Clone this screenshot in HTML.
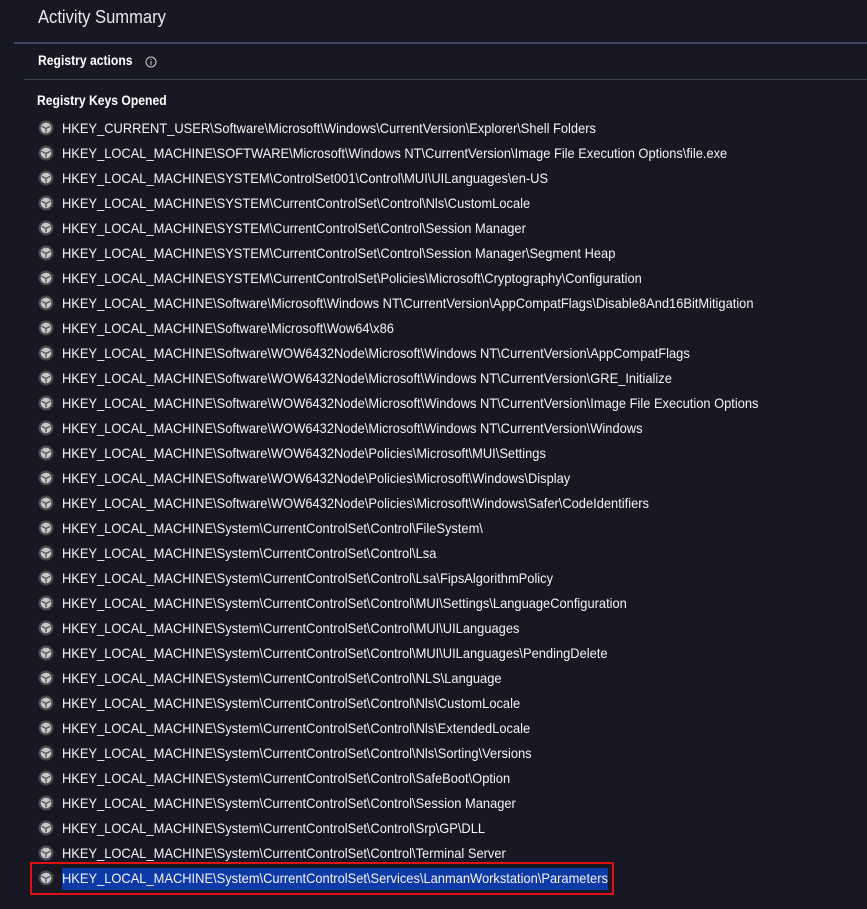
<!DOCTYPE html>
<html><head><meta charset="utf-8"><style>
html,body{margin:0;padding:0;background:#181824;width:867px;height:909px;overflow:hidden;font-family:"Liberation Sans",sans-serif;color:#fff}
.a{position:absolute;white-space:nowrap}
.t{position:absolute;left:62px;font-size:14px;line-height:18px;transform:scaleX(0.92);transform-origin:left center;white-space:nowrap;color:#f4f4f6}
.ic{position:absolute;left:38px;width:16px;height:16px}
</style></head><body>
<div class="a" style="left:38px;top:6px;font-size:18px;line-height:22px;color:#e8e8ee;transform:scaleX(0.92);transform-origin:left">Activity Summary</div>
<div class="a" style="left:14px;top:42px;width:853px;height:2px;background:#3c4460"></div>
<div class="a" style="left:38px;top:52px;font-size:13.5px;font-weight:bold;line-height:18px;transform:scaleX(0.9);transform-origin:left">Registry actions</div>
<svg class="a" style="left:145px;top:56px" width="12" height="12" viewBox="0 0 12 12"><circle cx="6" cy="6" r="5" fill="none" stroke="#ccc" stroke-width="1"/><rect x="5.5" y="5" width="1" height="4" fill="#ccc"/><rect x="5.5" y="3" width="1" height="1" fill="#ccc"/></svg>
<div class="a" style="left:24px;top:79px;width:843px;height:1px;background:#3a3f55"></div>
<div class="a" style="left:37px;top:92px;font-size:13.5px;font-weight:bold;line-height:18px;transform:scaleX(0.9);transform-origin:left">Registry Keys Opened</div>
<div class="a" style="left:30px;top:862px;width:580px;height:29px;border:2px solid #e01010"></div>
<div class="a" style="left:62px;top:868px;width:546px;height:22px;background:#0d3aa6"></div>
<div id="list"></div>
<script>
var k=["HKEY_CURRENT_USER\\Software\\Microsoft\\Windows\\CurrentVersion\\Explorer\\Shell Folders",
"HKEY_LOCAL_MACHINE\\SOFTWARE\\Microsoft\\Windows NT\\CurrentVersion\\Image File Execution Options\\file.exe",
"HKEY_LOCAL_MACHINE\\SYSTEM\\ControlSet001\\Control\\MUI\\UILanguages\\en-US",
"HKEY_LOCAL_MACHINE\\SYSTEM\\CurrentControlSet\\Control\\Nls\\CustomLocale",
"HKEY_LOCAL_MACHINE\\SYSTEM\\CurrentControlSet\\Control\\Session Manager",
"HKEY_LOCAL_MACHINE\\SYSTEM\\CurrentControlSet\\Control\\Session Manager\\Segment Heap",
"HKEY_LOCAL_MACHINE\\SYSTEM\\CurrentControlSet\\Policies\\Microsoft\\Cryptography\\Configuration",
"HKEY_LOCAL_MACHINE\\Software\\Microsoft\\Windows NT\\CurrentVersion\\AppCompatFlags\\Disable8And16BitMitigation",
"HKEY_LOCAL_MACHINE\\Software\\Microsoft\\Wow64\\x86",
"HKEY_LOCAL_MACHINE\\Software\\WOW6432Node\\Microsoft\\Windows NT\\CurrentVersion\\AppCompatFlags",
"HKEY_LOCAL_MACHINE\\Software\\WOW6432Node\\Microsoft\\Windows NT\\CurrentVersion\\GRE_Initialize",
"HKEY_LOCAL_MACHINE\\Software\\WOW6432Node\\Microsoft\\Windows NT\\CurrentVersion\\Image File Execution Options",
"HKEY_LOCAL_MACHINE\\Software\\WOW6432Node\\Microsoft\\Windows NT\\CurrentVersion\\Windows",
"HKEY_LOCAL_MACHINE\\Software\\WOW6432Node\\Policies\\Microsoft\\MUI\\Settings",
"HKEY_LOCAL_MACHINE\\Software\\WOW6432Node\\Policies\\Microsoft\\Windows\\Display",
"HKEY_LOCAL_MACHINE\\Software\\WOW6432Node\\Policies\\Microsoft\\Windows\\Safer\\CodeIdentifiers",
"HKEY_LOCAL_MACHINE\\System\\CurrentControlSet\\Control\\FileSystem\\",
"HKEY_LOCAL_MACHINE\\System\\CurrentControlSet\\Control\\Lsa",
"HKEY_LOCAL_MACHINE\\System\\CurrentControlSet\\Control\\Lsa\\FipsAlgorithmPolicy",
"HKEY_LOCAL_MACHINE\\System\\CurrentControlSet\\Control\\MUI\\Settings\\LanguageConfiguration",
"HKEY_LOCAL_MACHINE\\System\\CurrentControlSet\\Control\\MUI\\UILanguages",
"HKEY_LOCAL_MACHINE\\System\\CurrentControlSet\\Control\\MUI\\UILanguages\\PendingDelete",
"HKEY_LOCAL_MACHINE\\System\\CurrentControlSet\\Control\\NLS\\Language",
"HKEY_LOCAL_MACHINE\\System\\CurrentControlSet\\Control\\Nls\\CustomLocale",
"HKEY_LOCAL_MACHINE\\System\\CurrentControlSet\\Control\\Nls\\ExtendedLocale",
"HKEY_LOCAL_MACHINE\\System\\CurrentControlSet\\Control\\Nls\\Sorting\\Versions",
"HKEY_LOCAL_MACHINE\\System\\CurrentControlSet\\Control\\SafeBoot\\Option",
"HKEY_LOCAL_MACHINE\\System\\CurrentControlSet\\Control\\Session Manager",
"HKEY_LOCAL_MACHINE\\System\\CurrentControlSet\\Control\\Srp\\GP\\DLL",
"HKEY_LOCAL_MACHINE\\System\\CurrentControlSet\\Control\\Terminal Server",
"HKEY_LOCAL_MACHINE\\System\\CurrentControlSet\\Services\\LanmanWorkstation\\Parameters"];
var h="";
var icon='<svg viewBox="0 0 16 16" width="16" height="16"><circle cx="8" cy="8" r="7.5" fill="#4a4a50"/><circle cx="8" cy="8" r="5.3" fill="#c8c8c8"/><path d="M8 3.6L3.8 6v4.3L8 12.5l4.2-2.2V6z" fill="#c8c8c8"/><path d="M3.8 6.3L8 8.5l4.2-2.2M8 8.5v4" stroke="#4a4a50" stroke-width="1.2" fill="none"/></svg>';
for(var i=0;i<k.length;i++){var y=119+i*25;
h+='<div class="ic" style="top:'+(y+1)+'px">'+icon+'</div><div class="t" style="top:'+y+'px">'+k[i].replace(/</g,"&lt;")+'</div>';}
document.getElementById("list").innerHTML=h;
</script>
</body></html>
